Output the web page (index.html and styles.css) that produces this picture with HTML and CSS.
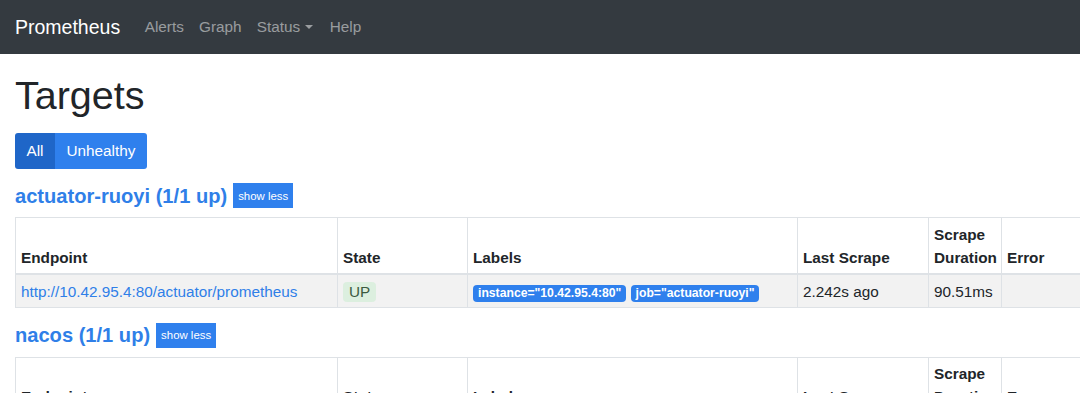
FILE: index.html
```html
<!DOCTYPE html>
<html>
<head>
  <meta charset="utf-8" />
  <title>Prometheus Time Series Collection and Processing Server</title>
  <link rel="stylesheet" href="styles.css">
</head>
<body>
  <nav class="navbar">
    <a class="brand" href="#">Prometheus</a>
    <ul class="nav-links">
      <li><a href="#">Alerts</a></li>
      <li><a href="#">Graph</a></li>
      <li><a href="#" class="dropdown">Status</a></li>
      <li><a href="#">Help</a></li>
    </ul>
  </nav>

  <main class="container">
    <h1>Targets</h1>

    <div class="btn-group">
      <button type="button" class="btn active">All</button>
      <button type="button" class="btn">Unhealthy</button>
    </div>

    <!-- one block per scrape pool -->
    <section class="pool">
      <div class="pool-head">
        <a class="pool-title" href="#">actuator-ruoyi (1/1 up)</a>
        <button type="button" class="btn-xs">show less</button>
      </div>
      <table class="targets">
        <colgroup>
          <col class="c-endpoint"><col class="c-state"><col class="c-labels">
          <col class="c-last"><col class="c-dur"><col class="c-error">
        </colgroup>
        <thead>
          <tr>
            <th>Endpoint</th>
            <th>State</th>
            <th>Labels</th>
            <th>Last Scrape</th>
            <th>Scrape Duration</th>
            <th>Error</th>
          </tr>
        </thead>
        <tbody>
          <tr>
            <td><a href="#">http://10.42.95.4:80/actuator/prometheus</a></td>
            <td><span class="state-up">UP</span></td>
            <td>
              <span class="label-badge">instance="10.42.95.4:80"</span>
              <span class="label-badge">job="actuator-ruoyi"</span>
            </td>
            <td>2.242s ago</td>
            <td>90.51ms</td>
            <td></td>
          </tr>
        </tbody>
      </table>
    </section>

    <section class="pool">
      <div class="pool-head">
        <a class="pool-title" href="#">nacos (1/1 up)</a>
        <button type="button" class="btn-xs">show less</button>
      </div>
      <table class="targets">
        <colgroup>
          <col class="c-endpoint"><col class="c-state"><col class="c-labels">
          <col class="c-last"><col class="c-dur"><col class="c-error">
        </colgroup>
        <thead>
          <tr>
            <th>Endpoint</th>
            <th>State</th>
            <th>Labels</th>
            <th>Last Scrape</th>
            <th>Scrape Duration</th>
            <th>Error</th>
          </tr>
        </thead>
      </table>
    </section>
  </main>
</body>
</html>
```

FILE: styles.css
```css
/* bootstrap-ish look for the targets page */

html, body {
  margin: 0;
  padding: 0;
}

body {
  font-family: "Liberation Sans", Arial, sans-serif;
  font-size: 15.3px;
  line-height: 1.5;
  color: #212529;
  background: #fff;
  overflow-x: hidden;
}

a {
  text-decoration: none;
}

/* top bar */
.navbar {
  display: flex;
  align-items: center;
  height: 54px;
  padding: 0 15px;
  background: #343a40;
}

.brand {
  color: #fff;
  font-size: 19.5px;
  margin-right: 17px;
  padding-top: 1px;
}

.nav-links {
  display: flex;
  list-style: none;
  margin: 0;
  padding: 1px 0 0;
}

.nav-links a {
  display: block;
  padding: 0 7.6px;
  color: rgba(255,255,255,0.5);
}

.nav-links li:last-child a {
  padding-left: 9px;
}

.dropdown::after {
  content: "";
  display: inline-block;
  margin-left: 5px;
  vertical-align: 3px;
  border-top: 4.6px solid;
  border-left: 4.6px solid transparent;
  border-right: 4.6px solid transparent;
}

.container {
  padding: 0 15px;
}

h1 {
  font-size: 39.5px;
  font-weight: 500;
  line-height: 1.2;
  margin: 18px 0 14px;
}

/* All / Unhealthy toggle */
.btn-group {
  display: flex;
}

.btn {
  font: inherit;
  height: 36px;
  padding: 0 11.5px;
  border: none;
  color: #fff;
  background: #2f80ed;
  cursor: pointer;
}

.btn:first-child {
  border-radius: 3px 0 0 3px;
}

.btn:last-child {
  border-radius: 0 3px 3px 0;
}

.btn.active {
  background: #1f66c8;
}

.pool-head {
  display: flex;
  align-items: center;
  margin: 14px 0 9px;
}

.pool-title {
  color: #2f7fe8;
  font-size: 20.1px;
  font-weight: bold;
  line-height: 1.2;
}

.btn-xs {
  font-family: inherit;
  font-size: 11.4px;
  height: 25px;
  padding: 0 5px;
  margin-left: 6px;
  border: none;
  color: #fff;
  background: #2f80ed;
}

/* tables */
.targets {
  width: 1120px;
  table-layout: fixed;
  border-collapse: collapse;
  margin-bottom: 15px;
}

.c-endpoint { width: 322px; }
.c-state { width: 130px; }
.c-labels { width: 330px; }
.c-last { width: 131px; }
.c-dur { width: 73px; }
.c-error { width: 134px; }

.targets th,
.targets td {
  border: 1px solid #dee2e6;
  padding: 4.4px 5px;
  text-align: left;
  line-height: 23px;
}

.targets th {
  vertical-align: bottom;
  border-bottom-width: 2px;
}

.targets td {
  vertical-align: middle;
}

.targets tbody tr {
  background: #f2f2f2;
}

.targets td a {
  color: #2f7fe8;
}

.state-up {
  display: inline-block;
  padding: 0 6px;
  border-radius: 4px;
  line-height: 20px;
  color: #3b5a40;
  background: #dcefdf;
}

.label-badge {
  display: inline-block;
  padding: 0 5px;
  margin-right: 0;
  border-radius: 4px;
  font-size: 12.2px;
  font-weight: bold;
  line-height: 17px;
  color: #fff;
  background: #2f80ed;
}
```
